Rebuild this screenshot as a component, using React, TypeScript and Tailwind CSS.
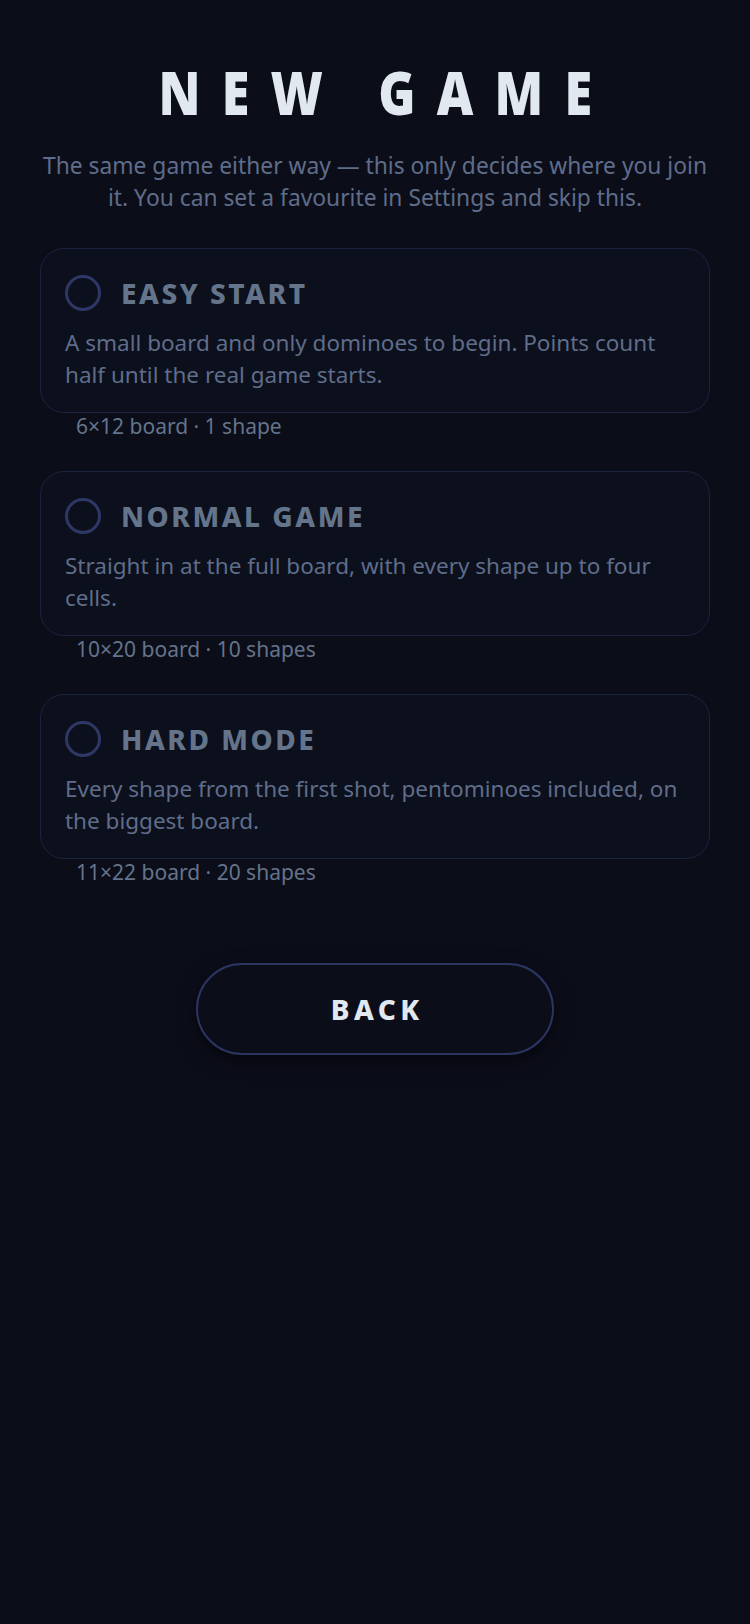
import React from "react";

const modes = [
  {
    title: "EASY START",
    desc: "A small board and only dominoes to begin. Points count half until the real game starts.",
    meta: "6×12 board · 1 shape",
  },
  {
    title: "NORMAL GAME",
    desc: "Straight in at the full board, with every shape up to four cells.",
    meta: "10×20 board · 10 shapes",
  },
  {
    title: "HARD MODE",
    desc: "Every shape from the first shot, pentominoes included, on the biggest board.",
    meta: "11×22 board · 20 shapes",
  },
];

export default function App() {
  return (
    <div
      className="min-h-[1624px] w-full bg-[#0b0d19] px-10"
      style={{ fontFamily: '"Noto Sans", "Open Sans", sans-serif' }}
    >
      <h1 className="pt-[56px] text-center text-[60px] font-black leading-[72px] text-[#e2e8f0]">
        <span className="inline-block scale-x-[0.84] pl-[0.42em] tracking-[0.42em]">NEW GAME</span>
      </h1>
      <p className="mt-[22px] text-center text-[22.8px] leading-[32px] text-[#5f6d8a]">
        The same game either way — this only decides where you join it. You can set a favourite in Settings and skip this.
      </p>
      <div className="mt-[34px] flex flex-col">
        {modes.map((m) => (
          <div key={m.title} className="mb-[32px] flex flex-col">
            <div className="rounded-[24px] border border-[#1c2340] bg-[#0c0f1c] px-6 pb-[21px] pt-6">
              <div className="flex h-10 items-center gap-5">
                <div className="h-9 w-9 shrink-0 rounded-full border-[3px] border-[#2e3766]" />
                <div className="text-[28px] font-extrabold tracking-[0.09em] text-[#64748b]">{m.title}</div>
              </div>
              <p className="mt-[14px] text-[22.5px] leading-[32px] text-[#5f6d8a]">{m.desc}</p>
            </div>
            <div className="pl-9 text-[21px] leading-[26px] text-[#64748b]">{m.meta}</div>
          </div>
        ))}
      </div>
      <div className="mt-[46px] flex justify-center">
        <button className="h-[92px] w-[358px] rounded-full border-2 border-[#2c3562] bg-[#0b0d19] pl-[0.16em] text-[28px] font-extrabold tracking-[0.16em] text-[#e2e8f0] shadow-[0_6px_18px_rgba(0,0,0,0.5)]">
          BACK
        </button>
      </div>
    </div>
  );
}
